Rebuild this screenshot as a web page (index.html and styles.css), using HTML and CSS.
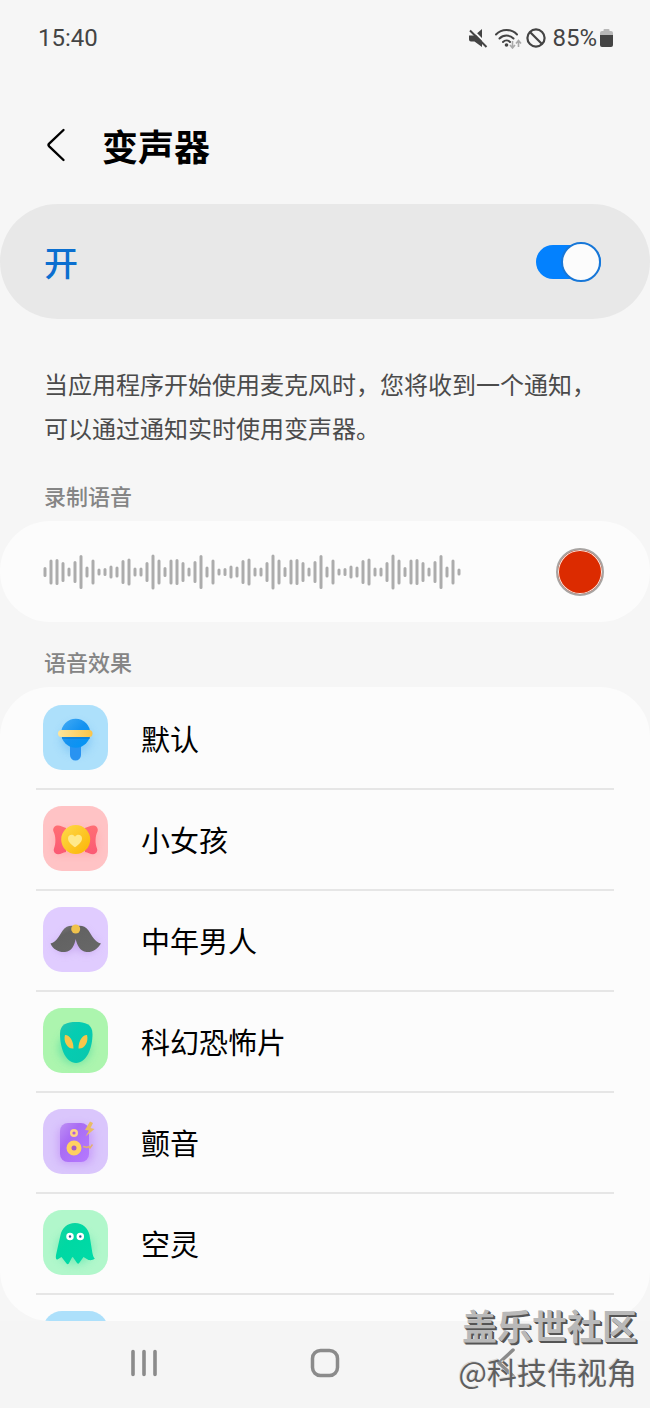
FILE: index.html
```html
<!DOCTYPE html>
<html lang="zh-CN">
<head>
<meta charset="utf-8">
<meta name="viewport" content="width=device-width, initial-scale=1">
<title>变声器</title>
<link rel="stylesheet" href="styles.css">
</head>
<body>
<div class="screen">
  <div class="status-bar">
    <time class="status-text">15:40</time>
    <div class="status-icons">
      <svg class="status-mute" width="20" height="22" viewBox="0 0 20 22" aria-hidden="true">
        <path d="M1 8.500h5.500L14 2v18l-7.500-5.500H3A2 2 0 0 1 1 12.500z" fill="#444"/>
        <path d="M2 .5 20.500 19" stroke="#f6f6f6" stroke-width="2"/>
        <path d="M2 3.500 18.500 20" stroke="#444" stroke-width="2"/>
      </svg>
      <svg width="28" height="22" viewBox="0 0 28 22" fill="none" aria-hidden="true">
        <g stroke="#444" stroke-width="2" stroke-linecap="round">
          <path d="M2 7.500a14.500 14.500 0 0 1 21 0"/>
          <path d="M5.500 11.500a9.800 9.800 0 0 1 14 0"/>
          <path d="M9 15a5 5 0 0 1 7 0"/>
        </g>
        <circle cx="12.500" cy="18" r="1.800" fill="#444"/>
        <path d="M18.500 14v6M16 18l2.500 3 2.500-3M24.500 20v-6M22 16.500l2.500-3 2.500 3" stroke="#aaa" stroke-width="1.600"/>
      </svg>
      <svg width="20" height="20" viewBox="0 0 20 20" fill="none" stroke="#444" stroke-width="2.200" aria-hidden="true">
        <circle cx="10" cy="10" r="8.600"/><path d="m4 4 12 12"/>
      </svg>
      <span class="status-text status-percent">85%</span>
      <svg width="13" height="20" viewBox="0 0 13 20" aria-hidden="true">
        <path d="M0 5a2 2 0 0 1 2-2h1.500V2a1 1 0 0 1 1-1h4a1 1 0 0 1 1 1v1H11a2 2 0 0 1 2 2v3H0z" fill="#b8b8b8"/>
        <path d="M0 7h13v10a2 2 0 0 1-2 2H2a2 2 0 0 1-2-2z" fill="#444"/>
      </svg>
    </div>
  </div>

  <header class="header">
    <button class="back" type="button" aria-label="返回">
      <svg width="20" height="34" viewBox="0 0 20 34" fill="none" stroke="#000" stroke-width="2.400" stroke-linecap="round" stroke-linejoin="round"><path d="M17.500 2 3.200 15.600a2 2 0 0 0 0 2.800L17.500 32"/></svg>
    </button>
    <h1 class="title">变声器</h1>
  </header>

  <main class="content">
    <label class="master">
      <span class="master-label">开</span>
      <input class="switch" type="checkbox" role="switch" checked>
    </label>

    <p class="description">当应用程序开始使用麦克风时，您将收到一个通知，可以通过通知实时使用变声器。</p>

    <h2 class="section-title">录制语音</h2>
    <section class="recorder">
      <svg class="wave" width="420" height="36" viewBox="0 0 417 36" preserveAspectRatio="xMinYMid meet" aria-hidden="true">
        <defs>
          <path id="wave-head" d="M2 14.500v7M8 7v22M14 6.500v23M20 9.500v17M26 15v6M32 8.500v19M38 2.500v31M44 14v8M50 7v22M56 16v4"/>
          <path id="wave-tail" d="M62 15.500v5M68 13v10M74 14v8M80 7.500v21M86 6v24M92 15v6M98 15v6M104 9.500v17M110 2v32M116 7v22"/>
        </defs>
        <g stroke="#acacac" stroke-width="3" stroke-linecap="round">
          <use href="#wave-head"/><use href="#wave-tail"/>
          <use href="#wave-head" x="120"/><use href="#wave-tail" x="120"/>
          <use href="#wave-head" x="240"/><use href="#wave-tail" x="240"/>
          <use href="#wave-head" x="360"/>
        </g>
      </svg>
      <button class="record" type="button" aria-label="录制"></button>
    </section>

    <h2 class="section-title">语音效果</h2>
    <ul class="effects">
      <li class="effect"><button class="effect-button" type="button">
        <svg class="effect-icon" viewBox="0 0 65 65" aria-hidden="true">
          <defs>
            <linearGradient id="blue-ball" x1="0" y1="0" x2="1" y2="1"><stop offset="0" stop-color="#45acf5"/><stop offset=".5" stop-color="#1592f0"/><stop offset="1" stop-color="#0094f5"/></linearGradient>
            <linearGradient id="gold-band"><stop offset="0" stop-color="#ffe59b"/><stop offset="1" stop-color="#fbc448"/></linearGradient>
            <filter id="soft" x="-50%" y="-50%" width="200%" height="200%"><feGaussianBlur stdDeviation="4"/></filter>
          </defs>
          <rect width="65" height="65" rx="19" fill="#ade0fb"/>
          <circle cx="33" cy="34" r="15" fill="#6fbcf3" opacity=".6" filter="url(#soft)"/>
          <path d="M27 38h11v12a5.500 5.500 0 0 1-11 0z" fill="#2993f1"/>
          <circle cx="32.700" cy="28.300" r="14.500" fill="url(#blue-ball)"/>
          <rect x="19" y="30" width="28" height="4" fill="#0875cf" opacity=".5"/>
          <rect x="15" y="25" width="34.500" height="7" rx="3.500" fill="url(#gold-band)"/>
        </svg>
        <span>默认</span></button></li>
      <li class="effect"><button class="effect-button" type="button">
        <svg class="effect-icon" viewBox="0 0 65 65" aria-hidden="true">
          <defs>
            <linearGradient id="candy" x1="0" y1="0" x2="1" y2="1"><stop offset="0" stop-color="#ffda4b"/><stop offset="1" stop-color="#fbb404"/></linearGradient>
            <linearGradient id="wrap" x1="0" y1="0" x2="0" y2="1"><stop offset="0" stop-color="#ff6e73"/><stop offset="1" stop-color="#fb5a74"/></linearGradient>
          </defs>
          <rect width="65" height="65" rx="19" fill="#ffc3c5"/>
          <path d="M12 24h42v24H12z" fill="#ff8a8e" opacity=".4" filter="url(#soft)"/>
          <path d="M23 22c-3-1-6-3-9-2.500-3 .5-4.500 3.500-3.500 6 2.500 5 2.500 12 .5 17-1 3 1 5.500 4 5.800 3 0 5-1.800 8-2.300zM42 22c3-1 6-3 9-2.500 3 .5 4.500 3.500 3.500 6-2.500 5-2.500 12-.5 17 1 3-1 5.500-4 5.800-3 0-5-1.800-8-2.300z" fill="url(#wrap)"/>
          <circle cx="32.700" cy="33.500" r="14.500" fill="url(#candy)"/>
          <path d="M32 41.200c-3-2-7-5-7-8.700 0-4 4.800-5 7-1.800 2.200-3.200 7-2.200 7 1.800 0 3.700-4 6.700-7 8.700z" fill="#ffe98b"/>
        </svg>
        <span>小女孩</span></button></li>
      <li class="effect"><button class="effect-button" type="button">
        <svg class="effect-icon" viewBox="0 0 65 65" aria-hidden="true">
          <defs><linearGradient id="hair" x1="0" y1="0" x2="1" y2="1"><stop offset="0" stop-color="#838383"/><stop offset=".3" stop-color="#626262"/><stop offset="1" stop-color="#686868"/></linearGradient></defs>
          <rect width="65" height="65" rx="19" fill="#e0ccff"/>
          <path d="M10 36c9 0 12-14 23-14s14 14 23 14c-7 13-19 12-23 2-6 11-17 10-23-2z" fill="#b28ce1" opacity=".6" filter="url(#soft)"/>
          <path d="M32.700 19.500c-5-1.500-9.500-.5-13 4C16 28.500 14 35 7.500 36.500 10 42.500 16 45.500 22 45c7-.5 9.500-7 10.700-13C34 38 37 44.500 43.500 45c6 .5 11-3 14.500-8.500-6.500-1.500-9-8-12.500-13-3.500-4.500-8-5.500-12.800-4z" fill="url(#hair)"/>
          <circle cx="32.700" cy="22" r="4.500" fill="#efc24c"/>
        </svg>
        <span>中年男人</span></button></li>
      <li class="effect"><button class="effect-button" type="button">
        <svg class="effect-icon" viewBox="0 0 65 65" aria-hidden="true">
          <defs><linearGradient id="alien" x1="0" y1="0" x2="1" y2="1"><stop offset="0" stop-color="#26c4ae"/><stop offset=".35" stop-color="#05cdb2"/><stop offset="1" stop-color="#09c7ad"/></linearGradient></defs>
          <rect width="65" height="65" rx="19" fill="#acf5ae"/>
          <ellipse cx="32" cy="40" rx="16" ry="16" fill="#45d89c" opacity=".6" filter="url(#soft)"/>
          <path d="M33 14c-9 0-16 2-16 12 0 15 6 29 16 29s16.500-14 16.500-29C49.500 16 42 14 33 14z" fill="url(#alien)"/>
          <path d="M22 27c4-.5 8.500 5 8.500 13.500C25 41.500 20 34 22 27z" fill="#f6c64b"/>
          <path d="M44 27c-4-.5-8.500 5-8.500 13.500C41 41.500 46 34 44 27z" fill="#f6c64b"/>
        </svg>
        <span>科幻恐怖片</span></button></li>
      <li class="effect"><button class="effect-button" type="button">
        <svg class="effect-icon" viewBox="0 0 65 65" aria-hidden="true">
          <defs><linearGradient id="speaker" x1="0" y1="0" x2="1" y2="1"><stop offset="0" stop-color="#bd8ff4"/><stop offset=".35" stop-color="#a96cf4"/><stop offset="1" stop-color="#b579ff"/></linearGradient></defs>
          <rect width="65" height="65" rx="19" fill="#dac6fc"/>
          <rect x="15" y="17" width="35" height="38" rx="9" fill="#b87cf5" opacity=".5" filter="url(#soft)"/>
          <rect x="17" y="14" width="29" height="39" rx="8" fill="url(#speaker)"/>
          <circle cx="31" cy="24" r="2.800" fill="#b05ddd" stroke="#ffd383" stroke-width="2.400"/>
          <circle cx="31" cy="39" r="5" fill="#a45bc8" stroke="#ffd061" stroke-width="5"/>
          <path d="m47 12.500-5 8.500 4 .5-3.500 6 9-7.500-4-1 2.500-5z" fill="#e9bc64"/>
          <path d="M40 37.500q3 .5 4 1l2-1 1 1.500 2.500-3.500" fill="none" stroke="#e2af71" stroke-width="1.500"/>
        </svg>
        <span>颤音</span></button></li>
      <li class="effect"><button class="effect-button" type="button">
        <svg class="effect-icon" viewBox="0 0 65 65" aria-hidden="true">
          <defs><linearGradient id="ghost" x1="0" y1="0" x2="1" y2="1"><stop offset="0" stop-color="#15d3a1"/><stop offset=".4" stop-color="#00d8a3"/><stop offset="1" stop-color="#00dba8"/></linearGradient></defs>
          <rect width="65" height="65" rx="19" fill="#b1f7cb"/>
          <ellipse cx="32" cy="38" rx="18" ry="16" fill="#52e4aa" opacity=".6" filter="url(#soft)"/>
          <path d="M32 13c-8 0-13 5-14.500 12L13 45c-.5 3 0 5 1.500 4.500l4-2.500 5 6.500c1 1 1.500 1 2.300 0l3.200-6q.5-1 1.200 0L34 53c.8 1 1.500 1 2.200 0l4.300-6 5 3c2.500.5 5-.2 6.300-1.500-1.500-1-2-3.500-2.500-6L46.500 25C45 18 40 13 32 13z" fill="url(#ghost)"/>
          <circle cx="27" cy="26.500" r="2.500" fill="#2a5f94" stroke="#fff" stroke-width="2.500"/>
          <circle cx="37.300" cy="26.500" r="2.500" fill="#2a5f94" stroke="#fff" stroke-width="2.500"/>
        </svg>
        <span>空灵</span></button></li>
      <li class="effect"><button class="effect-button" type="button" aria-label="更多效果">
        <svg class="effect-icon" viewBox="0 0 65 65" aria-hidden="true"><rect width="65" height="65" rx="19" fill="#ade0fb"/></svg>
      </button></li>
    </ul>
  </main>

  <nav class="nav-bar" aria-label="系统导航">
    <button class="nav-button" type="button" aria-label="最近"><svg width="28" height="30" viewBox="0 0 28 30" stroke="#8b8b8b" stroke-width="3.600" stroke-linecap="round"><path d="M3 3.500v23M14 3.500v23M25 3.500v23"/></svg></button>
    <button class="nav-button" type="button" aria-label="主屏幕"><svg width="30" height="30" viewBox="0 0 30 30" fill="none" stroke="#8b8b8b" stroke-width="3.500"><rect x="2.500" y="2.500" width="25" height="25" rx="8"/></svg></button>
    <button class="nav-button" type="button" aria-label="返回"><svg width="20" height="30" viewBox="0 0 20 30" fill="none" stroke="#8b8b8b" stroke-width="3.500" stroke-linecap="round" stroke-linejoin="round"><path d="M17 2 3 15l14 13"/></svg></button>
  </nav>

  <div class="watermark">
    <span class="watermark-brand">盖乐世社区</span>
    <span class="watermark-author">@科技伟视角</span>
  </div>
</div>
</body>
</html>
```
FILE: styles.css
```css
*,
*::before {
  box-sizing: border-box;
}

body {
  margin: 0;
  background: #f6f6f6;
  color: #000;
  font-family: "Noto Sans CJK SC", sans-serif;
}

button {
  border: 0;
  padding: 0;
  background: none;
  color: inherit;
  font: inherit;
  cursor: pointer;
}

svg {
  display: block;
  flex: none;
}

.screen {
  position: relative;
  display: flex;
  flex-direction: column;
  height: 100vh;
  overflow: hidden;
}

.status-bar {
  display: flex;
  flex: none;
  align-items: center;
  justify-content: space-between;
  height: 76px;
  padding: 0 37px 0 38px;
}

.status-icons {
  display: flex;
  align-items: center;
  gap: 4px;
}

.status-mute {
  margin-right: 2px;
}

.status-text {
  color: #444;
  font-family: Roboto, sans-serif;
  font-size: 24px;
  line-height: 28px;
}

.status-percent {
  margin-left: 2px;
  margin-right: -1px;
}

.header {
  display: flex;
  flex: none;
  align-items: center;
  gap: 36px;
  height: 128px;
  padding: 10px 44px 0 46px;
}

.title {
  margin: 0;
  font-size: 36px;
  font-weight: 700;
  line-height: 48px;
}

.content {
  display: flex;
  flex: 1;
  flex-direction: column;
  min-height: 0;
}

.master {
  display: flex;
  flex: none;
  align-items: center;
  justify-content: space-between;
  height: 115px;
  padding: 0 49px 0 44px;
  border-radius: 58px;
  background: #e8e8e8;
}

.master-label {
  color: #0b6fd0;
  font-size: 34px;
  font-weight: 500;
  line-height: 48px;
}

.switch {
  position: relative;
  width: 65px;
  height: 34px;
  margin: 0;
  border-radius: 17px;
  background: #0381fe;
  appearance: none;
}

.switch::before {
  position: absolute;
  top: -3px;
  right: 0;
  width: 40px;
  height: 40px;
  border: 2px solid #1777d8;
  border-radius: 50%;
  background: #fcfcfc;
  content: "";
}

.description {
  margin: 43px 44px 0;
  color: #4b4b4b;
  font-size: 24px;
  line-height: 44px;
}

.section-title {
  margin: 23px 44px 10px;
  color: #858585;
  font-size: 22px;
  font-weight: 500;
  line-height: 32px;
}

.description + .section-title {
  margin-top: 29px;
}

.recorder {
  display: flex;
  flex: none;
  align-items: center;
  justify-content: space-between;
  height: 101px;
  padding: 0 46px 0 43px;
  border-radius: 50px;
  background: #fcfcfc;
}

.record {
  width: 48px;
  height: 48px;
  border: 2px solid #a8a4a2;
  border-radius: 50%;
  background: #dc2b00;
  box-shadow: inset 0 0 0 1px #fbeae4;
}

.effects {
  flex: 1;
  min-height: 0;
  margin: 0;
  padding: 0 36px;
  overflow: hidden;
  border-radius: 50px;
  background: #fcfcfc;
  list-style: none;
}

.effect + .effect {
  border-top: 2px solid #e6e6e6;
}

.effect-button {
  display: flex;
  align-items: center;
  gap: 33px;
  width: 100%;
  padding: 16px 7px 18px;
  font-size: 29px;
  line-height: 44px;
  text-align: left;
}

.effect:first-child .effect-button {
  padding-top: 18px;
}

.effect-icon {
  width: 65px;
  height: 65px;
}

.nav-bar {
  display: grid;
  flex: none;
  grid-template-columns: repeat(3, 1fr);
  height: 87px;
  padding: 0 54px 4px;
  background: #f5f5f5;
}

.nav-button {
  display: flex;
  align-items: center;
  justify-content: center;
}

.watermark {
  position: absolute;
  right: 13px;
  bottom: 15px;
  display: flex;
  flex-direction: column;
  align-items: flex-end;
  pointer-events: none;
}

.watermark-brand {
  color: #b9b9b9;
  font-size: 35px;
  font-weight: 700;
  line-height: 48px;
  text-shadow: 1px 1px #555, 2px 2px #555;
}

.watermark-author {
  color: #5f5f5f;
  font-size: 30px;
  line-height: 44px;
  text-shadow: -1px -1px #d8d8d8;
}
```
